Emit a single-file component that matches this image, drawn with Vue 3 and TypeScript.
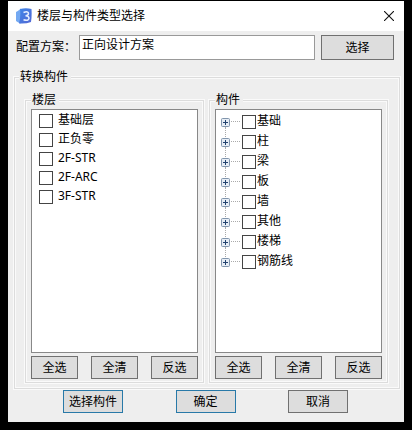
<script setup lang="ts">
import { ref } from 'vue'

interface Item {
  name: string
  checked: boolean
}

const toItems = (names: string[]): Item[] => names.map((name) => ({ name, checked: false }))

const scheme = ref('正向设计方案')
const floors = ref<Item[]>(toItems(['基础层', '正负零', '2F-STR', '2F-ARC', '3F-STR']))
const parts = ref<Item[]>(toItems(['基础', '柱', '梁', '板', '墙', '其他', '楼梯', '钢筋线']))

function setAll(items: Item[], value: boolean) {
  items.forEach((item) => (item.checked = value))
}

function invert(items: Item[]) {
  items.forEach((item) => (item.checked = !item.checked))
}
</script>

<template>
  <main class="desktop">
    <section class="dialog" role="dialog" aria-labelledby="dialog-title">
      <header class="titlebar">
        <svg class="logo" viewBox="0 0 16 16" aria-hidden="true">
          <defs>
            <linearGradient id="logo-fill" x1="0" y1="0" x2="1" y2="1">
              <stop offset="0" stop-color="#3f86e8" />
              <stop offset="1" stop-color="#5468d4" />
            </linearGradient>
          </defs>
          <path d="M0 4 Q2 3 5 0.500 V15.500 Q2 14.500 0 13 Z" fill="#74a9f2" />
          <path d="M4 1 Q10 -0.500 15.500 1 Q16 8 15 14 Q10 16 3 15.500 Q5 8 4 1 Z" fill="url(#logo-fill)" />
          <path d="M7.500 4.500 Q12.500 2.800 12.500 5.500 Q12.500 7.500 9.500 7.700 Q13 8 13 10.300 Q12.500 13.300 7.500 11.800" fill="none" stroke="#e4eeff" stroke-width="1.500" />
        </svg>
        <h1 id="dialog-title">楼层与构件类型选择</h1>
        <button class="close" type="button" aria-label="关闭">
          <svg viewBox="0 0 10 10" aria-hidden="true">
            <path d="M0 0 L10 10 M10 0 L0 10" stroke="#111" stroke-width="1.100" />
          </svg>
        </button>
      </header>

      <div class="scheme">
        <label for="scheme">配置方案：</label>
        <input id="scheme" v-model="scheme" type="text" />
        <button class="btn" type="button">选择</button>
      </div>

      <fieldset class="group outer">
        <legend>转换构件</legend>
        <div class="columns">
          <fieldset class="group inner">
            <legend>楼层</legend>
            <ul class="list floors">
              <li v-for="item in floors" :key="item.name">
                <label><input v-model="item.checked" type="checkbox" /><span>{{ item.name }}</span></label>
              </li>
            </ul>
            <div class="actions">
              <button class="btn" type="button" @click="setAll(floors, true)">全选</button>
              <button class="btn" type="button" @click="setAll(floors, false)">全清</button>
              <button class="btn" type="button" @click="invert(floors)">反选</button>
            </div>
          </fieldset>
          <fieldset class="group inner">
            <legend>构件</legend>
            <ul class="list tree">
              <li v-for="item in parts" :key="item.name">
                <button class="expand" type="button" :aria-label="'展开' + item.name">
                  <svg viewBox="0 0 9 9" aria-hidden="true">
                    <rect x="0.500" y="0.500" width="8" height="8" rx="1" fill="#e6edf5" stroke="#8195ac" />
                    <path d="M2 4.500 H7 M4.500 2 V7" stroke="#22426e" />
                  </svg>
                </button>
                <span class="branch"></span>
                <label><input v-model="item.checked" type="checkbox" /><span>{{ item.name }}</span></label>
              </li>
            </ul>
            <div class="actions">
              <button class="btn" type="button" @click="setAll(parts, true)">全选</button>
              <button class="btn" type="button" @click="setAll(parts, false)">全清</button>
              <button class="btn" type="button" @click="invert(parts)">反选</button>
            </div>
          </fieldset>
        </div>
      </fieldset>

      <footer class="footer">
        <button class="btn accent" type="button">选择构件</button>
        <button class="btn accent" type="button">确定</button>
        <button class="btn" type="button">取消</button>
      </footer>
    </section>
  </main>
</template>

<style>
body {
  background: #000;
}
</style>

<style scoped>
* {
  box-sizing: border-box;
}

.desktop {
  display: flex;
  min-height: 100vh;
  padding: 1px 8px 8px;
  background: #000;
  color: #000;
  font: 12px/16px "Noto Sans", "Noto Sans CJK SC", sans-serif;
}

.dialog {
  display: flex;
  flex: 1;
  flex-direction: column;
  min-width: 0;
  background: #eee;
}

.titlebar {
  display: flex;
  align-items: center;
  height: 30px;
  padding: 0 8px;
  background: #fff;
}

.logo {
  width: 16px;
  height: 16px;
}

h1 {
  flex: 1;
  margin: 0 0 0 5px;
  font-size: 12px;
  font-weight: 400;
}

button,
input {
  margin: 0;
  color: inherit;
  font: inherit;
}

.close {
  display: flex;
  align-items: center;
  justify-content: center;
  width: 14px;
  height: 20px;
  padding: 0;
  border: 0;
  background: none;
}

.close svg {
  width: 10px;
  height: 10px;
}

.scheme {
  display: flex;
  padding: 4px 10px 0 8px;
}

.scheme label {
  width: 63px;
  padding-top: 4px;
  white-space: nowrap;
}

.scheme input {
  flex: 1;
  min-width: 0;
  height: 25px;
  padding: 0 2px 8px;
  border: 1px solid #999;
  border-radius: 0;
  background: #fff;
}

.scheme .btn {
  width: 73px;
  height: 25px;
  margin-left: 6px;
}

.btn {
  height: 23px;
  padding: 0;
  border: 1px solid #707070;
  border-radius: 0;
  background: #ddd;
  text-align: center;
}

.btn.accent {
  border-color: #2879a8;
}

/* Etched frame: a grey line between two white ones. */
.group {
  display: flex;
  flex: 1;
  flex-direction: column;
  min-width: 0;
  margin: 0;
  border: 3px double #fafafa;
  background: linear-gradient(#eee, #eee) padding-box, #dcdcdc border-box;
}

.group legend {
  height: 16px;
  padding: 0 3px 0 1px;
  background: #eee;
}

.outer {
  margin: 9px 3px 0 5px;
  padding: 7px 9px 3px 8px;
}

.outer > legend {
  margin-left: -5px;
}

.columns {
  display: flex;
  flex: 1;
  gap: 3px;
}

.inner {
  padding: 1px 4px 2px;
}

.list {
  flex: 1;
  margin: 0;
  border: 1px solid #888;
  background: #fff;
  list-style: none;
}

.floors {
  padding: 2px 7px;
}

.tree {
  padding: 2px 5px;
}

.list label {
  display: flex;
  align-items: center;
}

.list input {
  width: 14px;
  height: 14px;
  border: 1px solid #444;
  border-radius: 0;
  background: #fff;
  appearance: none;
}

.list input:checked {
  background: #2879a8;
  box-shadow: inset 0 0 0 2px #fff;
}

.floors li {
  height: 19px;
}

.floors label {
  gap: 5px;
}

.floors span {
  padding-bottom: 2px;
}

.tree li {
  position: relative;
  display: flex;
  align-items: center;
  height: 20px;
}

.tree li:not(:last-child)::before {
  position: absolute;
  top: 15px;
  left: 4px;
  height: 10px;
  border-left: 1px dotted #aaa;
  content: "";
}

.expand {
  display: flex;
  width: 9px;
  height: 9px;
  padding: 0;
  border: 0;
  background: none;
}

.expand svg {
  width: 9px;
  height: 9px;
}

.branch {
  width: 9px;
  margin: 0 2px 0 1px;
  border-top: 1px dotted #aaa;
}

.tree label {
  gap: 1px;
}

.tree span {
  padding-bottom: 2px;
}

.actions {
  display: flex;
  justify-content: space-between;
  padding-top: 3px;
}

.actions .btn {
  width: 47px;
}

.footer {
  display: flex;
  justify-content: space-between;
  padding: 0 56px 9px 55px;
}

.footer .btn {
  width: 60px;
}
</style>
